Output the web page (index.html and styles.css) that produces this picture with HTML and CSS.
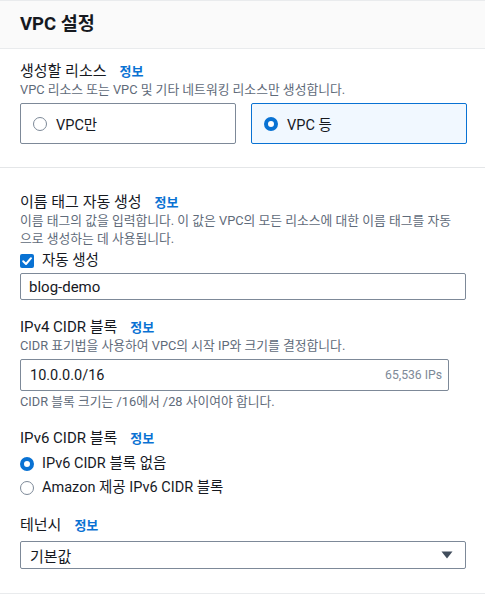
FILE: index.html
```html
<!DOCTYPE html>
<html lang="ko">
<head>
<meta charset="utf-8">
<title>VPC 설정</title>
<link rel="stylesheet" href="styles.css">
</head>
<body>
<div class="panel">
  <div class="panel-header"><h2 class="title">VPC 설정</h2></div>

  <div class="section section-top">
    <div class="label-row"><span class="label">생성할 리소스</span><a class="info">정보</a></div>
    <div class="desc">VPC 리소스 또는 VPC 및 기타 네트워킹 리소스만 생성합니다.</div>
    <div class="tiles">
      <div class="tile"><span class="radio"></span><span class="tile-text">VPC만</span></div>
      <div class="tile tile-selected"><span class="radio radio-on"></span><span class="tile-text">VPC 등</span></div>
    </div>
  </div>

  <div class="section section-main">
    <div class="field">
      <div class="label-row"><span class="label">이름 태그 자동 생성</span><a class="info">정보</a></div>
      <div class="desc">이름 태그의 값을 입력합니다. 이 값은 VPC의 모든 리소스에 대한 이름 태그를 자동으로 생성하는 데 사용됩니다.</div>
      <div class="check-row">
        <span class="checkbox"><svg viewBox="0 0 14 14" width="14" height="14"><path d="M3.2 7.2 L6 10 L11 4.2" fill="none" stroke="#fff" stroke-width="2" stroke-linecap="round" stroke-linejoin="round"/></svg></span>
        <span class="option-text">자동 생성</span>
      </div>
      <div class="input input-name">blog-demo</div>
    </div>

    <div class="field field-gap">
      <div class="label-row"><span class="label">IPv4 CIDR 블록</span><a class="info">정보</a></div>
      <div class="desc">CIDR 표기법을 사용하여 VPC의 시작 IP와 크기를 결정합니다.</div>
      <div class="input input-cidr"><span>10.0.0.0/16</span><span class="suffix">65,536 IPs</span></div>
      <div class="hint">CIDR 블록 크기는 /16에서 /28 사이여야 합니다.</div>
    </div>

    <div class="field field-gap">
      <div class="label-row"><span class="label">IPv6 CIDR 블록</span><a class="info">정보</a></div>
      <div class="radio-group">
        <div class="radio-row"><span class="radio radio-on"></span><span class="option-text">IPv6 CIDR 블록 없음</span></div>
        <div class="radio-row"><span class="radio"></span><span class="option-text">Amazon 제공 IPv6 CIDR 블록</span></div>
      </div>
    </div>

    <div class="field field-gap-sm">
      <div class="label-row"><span class="label">테넌시</span><a class="info">정보</a></div>
      <div class="input select"><span>기본값</span><svg class="caret" viewBox="0 0 12 8" width="12" height="8"><path d="M0.5 0.5 H11.5 L6 7.5 Z" fill="#414d5c"/></svg></div>
    </div>
  </div>
</div>
</body>
</html>
```

FILE: styles.css
```css
* { box-sizing: border-box; }

html, body {
  margin: 0;
  padding: 0;
  background: #ffffff;
  overflow: hidden;
}

body {
  font-family: Roboto, "Noto Sans CJK KR", sans-serif;
  color: #16191f;
  font-size: 15px;
}

.panel {
  border-top: 1px solid #e9ebed;
  border-bottom: 1px solid #e9ebed;
  width: 485px;
}

.panel-header {
  height: 48px;
  background: #fafafa;
  border-bottom: 1px solid #e9ebed;
  padding: 0 20px;
  display: flex;
  align-items: center;
}

.title {
  margin: 0;
  font-size: 18.5px;
  font-weight: 700;
  color: #16191f;
  line-height: 24px;
  position: relative;
  top: -1px;
}

.section {
  padding-left: 20px;
  padding-right: 19px;
}

.section-top {
  padding-top: 12px;
  padding-bottom: 23px;
  border-bottom: 1px solid #e4e6e8;
}

.section-main {
  padding-top: 24px;
  padding-bottom: 24px;
}

.label-row {
  display: flex;
  align-items: center;
  height: 20px;
  gap: 13px;
}

.label {
  font-size: 15px;
  line-height: 20px;
  color: #16191f;
}

.info {
  font-family: "Noto Sans CJK KR", sans-serif;
  font-size: 13px;
  font-weight: 700;
  color: #0972d3;
  line-height: 20px;
}

.desc, .hint {
  font-size: 12.8px;
  line-height: 18px;
  color: #5f6b7a;
}

.desc {
  margin-right: 10px;
}

.tiles {
  margin-top: 4px;
  display: grid;
  grid-template-columns: 216px 216px;
  gap: 15px;
}

.tile {
  height: 41px;
  border: 1px solid #7d8998;
  border-radius: 2px;
  display: flex;
  align-items: center;
  padding-left: 12px;
  gap: 9px;
}

.tile-selected {
  border-color: #0972d3;
  background: #f1f8ff;
}

.tile-text {
  font-size: 14.5px;
  color: #16191f;
}

.radio {
  width: 14px;
  height: 14px;
  border-radius: 50%;
  border: 1.5px solid #7d8998;
  background: #fff;
  flex: none;
}

.radio-on {
  border: 4px solid #0972d3;
  background: #fff;
}

.check-row {
  margin-top: 3px;
  height: 20px;
  display: flex;
  align-items: center;
  gap: 8px;
}

.checkbox {
  width: 14px;
  height: 14px;
  border-radius: 2px;
  background: #0972d3;
  display: flex;
  flex: none;
}

.option-text {
  font-size: 14.5px;
  color: #16191f;
  line-height: 20px;
}

.input {
  border: 1px solid #7d8998;
  border-radius: 2px;
  display: flex;
  align-items: center;
  font-size: 15px;
  color: #16191f;
}

.input-name {
  margin-top: 2px;
  height: 27px;
  width: 446px;
  padding-left: 8px;
}

.input-cidr {
  margin-top: 4px;
  height: 32px;
  width: 429px;
  padding-left: 9px;
  padding-right: 6px;
  justify-content: space-between;
  font-size: 14.5px;
}

.suffix {
  font-size: 12.2px;
  color: #7d8998;
}

.hint {
  margin-top: 2px;
}

.field-gap {
  margin-top: 17px;
}

.field-gap-sm {
  margin-top: 15px;
}

.radio-group {
  margin-top: 4px;
  display: flex;
  flex-direction: column;
}

.radio-row {
  height: 24px;
  display: flex;
  align-items: center;
  gap: 8px;
}

.select {
  margin-top: 6px;
  height: 28px;
  width: 446px;
  padding-left: 9px;
  padding-right: 12px;
  justify-content: space-between;
}

.caret {
  display: block;
}
```
